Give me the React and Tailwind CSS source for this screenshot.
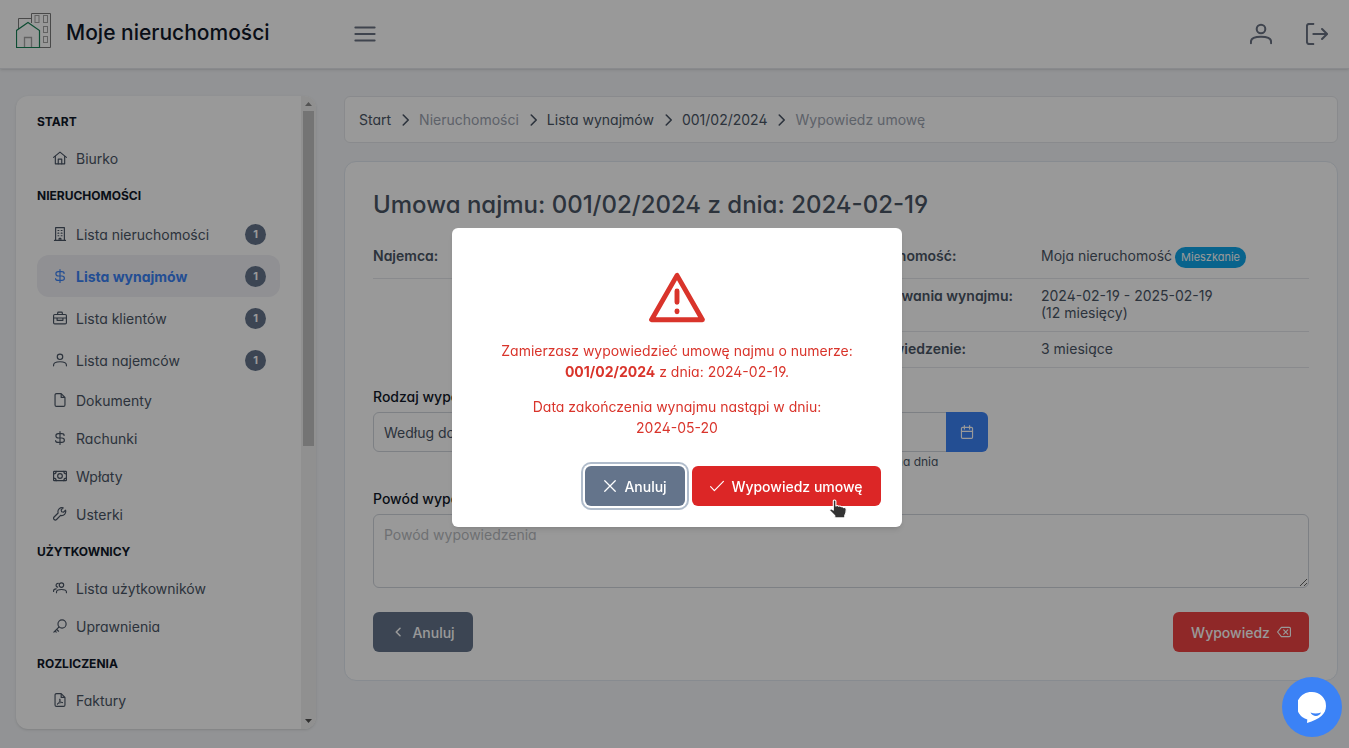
import React from "react";

function Icon({ size = "size-[14px]", sw = 2, className = "", children }) {
  return (
    <svg
      viewBox="0 0 24 24"
      fill="none"
      stroke="currentColor"
      strokeWidth={sw}
      strokeLinecap="round"
      strokeLinejoin="round"
      aria-hidden="true"
      className={`${size} shrink-0 ${className}`}
    >
      {children}
    </svg>
  );
}

const glyphs = {
  home: (
    <>
      <path d="M1 11 12 2l11 9" />
      <path d="M4 9v13h16V9" />
      <path d="M9 22v-8h6v8" />
    </>
  ),
  building: (
    <>
      <path d="M4.500 23V1h15v22M2.500 23h19" />
      <path d="M8.500 6h1.500M14 6h1.500M8.500 10.500h1.500M14 10.500h1.500M8.500 15h1.500M14 15h1.500M10.500 23v-3.500h3V23" />
    </>
  ),
  dollar: (
    <path d="M12 1v22M19 7.500C19 5.500 17.500 4.500 15 4.500H9C6.500 4.500 5 6 5 8.200S6.500 12 9 12h6c2.500 0 4.500 1.500 4.500 3.800s-2 3.700-4.500 3.700H9c-2.500 0-4.500-1-4.500-3" />
  ),
  briefcase: (
    <>
      <rect x="1" y="6" width="22" height="16" rx="2" />
      <path d="M8 6V3.500A1.500 1.500 0 0 1 9.500 2h5A1.500 1.500 0 0 1 16 3.500V6M1 12h22M7 12v4h10v-4" />
    </>
  ),
  user: (
    <>
      <circle cx="12" cy="6.500" r="4.700" />
      <path d="M1 22v-1.500c0-3.500 4-5.500 11-5.500s11 2 11 5.500V22" />
    </>
  ),
  file: (
    <path d="M14 1H6a2.500 2.500 0 0 0-2.500 2.500v17A2.500 2.500 0 0 0 6 23h12a2.500 2.500 0 0 0 2.500-2.500V7.500L14 1v6.500h6.500" />
  ),
  money: (
    <>
      <rect x="1" y="4" width="22" height="16" rx="1" />
      <circle cx="12" cy="12" r="4" />
      <path d="M1 8.500C4 8.500 5.500 7 5.500 4M23 8.500c-3 0-4.500-1.500-4.500-4.500M1 15.500c3 0 4.500 1.500 4.500 4.500M23 15.500c-3 0-4.500 1.500-4.500 4.500" />
    </>
  ),
  wrench: (
    <path d="M21.500 5.500 18 9l-3.200-.8L14 5l3.500-3.500a7 7 0 0 0-8.700 8.800L1.900 17.200a3 3 0 0 0 0 4.200 3 3 0 0 0 4.200 0l6.900-7a7 7 0 0 0 8.500-8.900z" />
  ),
  users: (
    <>
      <circle cx="14.500" cy="7" r="3.800" />
      <path d="M6 20v-1.500c0-2.500 3.500-4 8.500-4s8.500 1.500 8.500 4V20" />
      <path d="M9 4.200a3 3 0 1 0-1 6.300M1 18v-1.300c0-1.800 1.600-3 4.500-3.200" />
    </>
  ),
  key: (
    <>
      <circle cx="15.500" cy="8.500" r="7" />
      <path d="M10.500 13.500 1.500 22.500M6.500 18l3 3M3.500 20.500l2 2" />
    </>
  ),
  pdf: (
    <>
      <path d="M14 1H6a2.500 2.500 0 0 0-2.500 2.500v17A2.500 2.500 0 0 0 6 23h12a2.500 2.500 0 0 0 2.500-2.500V7.500L14 1v6.500h6.500" />
      <path d="M7.500 19c3-1.500 4.500-5 4.200-9 0 4 2 6.500 5.300 6.500-3.500-.5-7 .5-9.500 2.500z" strokeWidth="1.500" />
    </>
  ),
};

const menu = [
  { title: "Start", items: [{ icon: "home", label: "Biurko" }] },
  {
    title: "Nieruchomości",
    items: [
      { icon: "building", label: "Lista nieruchomości", badge: 1 },
      { icon: "dollar", label: "Lista wynajmów", badge: 1, active: true },
      { icon: "briefcase", label: "Lista klientów", badge: 1 },
      { icon: "user", label: "Lista najemców", badge: 1 },
      { icon: "file", label: "Dokumenty" },
      { icon: "dollar", label: "Rachunki" },
      { icon: "money", label: "Wpłaty" },
      { icon: "wrench", label: "Usterki" },
    ],
  },
  {
    title: "Użytkownicy",
    items: [
      { icon: "users", label: "Lista użytkowników" },
      { icon: "key", label: "Uprawnienia" },
    ],
  },
  { title: "Rozliczenia", items: [{ icon: "pdf", label: "Faktury" }] },
];

function Logo() {
  return (
    <svg viewBox="0 0 36 36" fill="none" className="size-9" aria-hidden="true">
      <g stroke="#7a7a7a" strokeWidth="1">
        <path d="M2.500 16V5.500h13M15.500 10V.500h19v34h-11" />
      </g>
      <g stroke="#a3a3a3" strokeWidth="1">
        <rect x="19" y="2.500" width="4" height="7" />
        <rect x="27.500" y="2.500" width="4" height="7" />
        <rect x="27.500" y="13.500" width="4" height="6" />
        <rect x="27.500" y="23.500" width="4" height="6" />
        <path d="M8.500 34v-9.500h7V34" strokeWidth="1.300" />
      </g>
      <path d="M.500 34.500v-17L12 9.500l11.500 8v17z" stroke="#178055" strokeWidth="1.200" />
    </svg>
  );
}

function Header() {
  return (
    <header className="flex h-[69px] shrink-0 items-center border-b border-gray-200 bg-white pl-4 pr-[21px] text-gray-500 shadow-sm">
      <a href="#start" className="flex w-[338px] items-center gap-[14px] pb-0.5 text-[21px] font-medium text-gray-900">
        <span className="-mt-1">
          <Logo />
        </span>
        Moje nieruchomości
      </a>
      <button type="button" aria-label="Menu">
        <Icon size="size-[22px]" sw={2.200}>
          <path d="M1.500 5h21M1.500 12h21M1.500 19h21" />
        </Icon>
      </button>
      <div className="ml-auto flex items-center gap-[34px]">
        <button type="button" aria-label="Profil">
          <Icon size="size-[22px]" sw={2.200}>
            {glyphs.user}
          </Icon>
        </button>
        <button type="button" aria-label="Wyloguj">
          <Icon size="size-[22px]" sw={2.200}>
            <path d="M8 1H3.500A2.500 2.500 0 0 0 1 3.500v17A2.500 2.500 0 0 0 3.500 23H8M8 12h15M17.500 6.500 23 12l-5.500 5.500" />
          </Icon>
        </button>
      </div>
    </header>
  );
}

function Sidebar() {
  return (
    <aside className="flex w-[300px] shrink-0 overflow-hidden rounded-xl bg-white shadow">
      <nav className="min-w-0 flex-1 overflow-hidden px-[21px] pt-[7px]">
        {menu.map((group) => (
          <section key={group.title}>
            <h2 className="flex h-9 items-center pt-0.5 text-[12px] font-bold uppercase text-gray-900">{group.title}</h2>
            <ul>
              {group.items.map((item) => (
                <li key={item.label}>
                  <a
                    href="#menu"
                    className={`flex items-center gap-[9px] rounded-xl pl-4 pr-[14px] ${item.badge ? "h-[42px]" : "h-[38px]"} ${
                      item.active ? "bg-[#f0f0f5] font-bold text-[#3b82f6]" : ""
                    }`}
                  >
                    <Icon>{glyphs[item.icon]}</Icon>
                    <span className="flex-1">{item.label}</span>
                    {item.badge && (
                      <span className="flex size-[21px] items-center justify-center rounded-full bg-[#64748b] text-[11px] font-bold text-white">
                        {item.badge}
                      </span>
                    )}
                  </a>
                </li>
              ))}
            </ul>
          </section>
        ))}
      </nav>
      <div className="flex w-[15px] flex-col items-center bg-[#f1f1f1]" aria-hidden="true">
        <svg viewBox="0 0 15 15" className="size-[15px]">
          <path d="M4 10h7L7.500 6z" fill="#8b8b8b" />
        </svg>
        <div className="w-[11px] basis-[335px] bg-[#c1c1c1]" />
        <div className="flex-1" />
        <svg viewBox="0 0 15 15" className="size-[15px]">
          <path d="M4 5h7L7.500 9z" fill="#505050" />
        </svg>
      </div>
    </aside>
  );
}

function Breadcrumb() {
  const parts = [
    { label: "Start" },
    { label: "Nieruchomości", muted: true },
    { label: "Lista wynajmów" },
    { label: "001/02/2024" },
    { label: "Wypowiedz umowę", muted: true },
  ];
  return (
    <nav aria-label="Ścieżka" className="flex h-[47px] items-center rounded-md border border-gray-200 bg-white px-[14px]">
      <ol className="flex items-center gap-[7px]">
        {parts.map((part, i) => (
          <li key={part.label} className="flex items-center gap-[7px]">
            {i > 0 && (
              <Icon sw={2.800}>
                <path d="M9 3.500 17.500 12 9 20.500" />
              </Icon>
            )}
            {part.muted ? (
              <span className="text-[#9ca3af]">{part.label}</span>
            ) : (
              <a href="#sciezka">{part.label}</a>
            )}
          </li>
        ))}
      </ol>
    </nav>
  );
}

const cell = "border-b border-gray-200 pt-2 pb-[10px] text-left align-top";

function DetailsTable({ rows }) {
  return (
    <table className="w-full self-start border-collapse leading-[17px]">
      <tbody>
        {rows.map(([label, value]) => (
          <tr key={label}>
            <th scope="row" className={`${cell} w-[188px] font-semibold`}>
              {label}
            </th>
            <td className={cell}>{value}</td>
          </tr>
        ))}
      </tbody>
    </table>
  );
}

const fieldBox = "rounded-md border border-gray-300 bg-white px-[10px] text-gray-600 placeholder:text-[#b8bbc0]";
const buttonBase = "flex h-10 items-center justify-center rounded-md text-white font-medium";

function ContractCard() {
  return (
    <section className="rounded-xl border border-slate-200 bg-white p-7">
      <h1 className="mb-[19px] text-[24px] leading-[30px] font-medium">Umowa najmu: 001/02/2024 z dnia: 2024-02-19</h1>
      <div className="grid grid-cols-2">
        <DetailsTable
          rows={[["Najemca:", <span className="block h-[21px]">Jan</span>]]}
        />
        <div className="pl-3">
          <DetailsTable
            rows={[
              [
                "Nieruchomość:",
                <span className="flex h-[21px] gap-[3px]">
                  Moja nieruchomość
                  <span className="flex h-[21px] items-center rounded-full bg-[#0ea5e9] px-[6px] text-[11px] text-white">
                    Mieszkanie
                  </span>
                </span>,
              ],
              [
                "Czas trwania wynajmu:",
                <>
                  2024-02-19 - 2025-02-19
                  <br />
                  (12 miesięcy)
                </>,
              ],
              ["Wypowiedzenie:", "3 miesiące"],
            ]}
          />
        </div>
      </div>
      <form className="mt-5">
        <div className="grid grid-cols-3 gap-7">
          <div className="flex flex-col">
            <label htmlFor="rodzaj" className="mb-[7px] leading-[17px] font-medium text-gray-900">
              Rodzaj wypowiedzenia
            </label>
            <select id="rodzaj" className={`h-10 w-full appearance-none ${fieldBox}`}>
              <option>Według dowolnej daty</option>
            </select>
          </div>
          <div className="flex flex-col">
            <label htmlFor="data" className="mb-[7px] leading-[17px] font-medium text-gray-900">
              Data
            </label>
            <div className="flex">
              <input
                id="data"
                type="text"
                defaultValue="2024-05-20"
                className={`h-10 min-w-0 flex-1 rounded-r-none border-r-0 ${fieldBox}`}
              />
              <button
                type="button"
                aria-label="Kalendarz"
                className="flex h-10 w-[42px] items-center justify-center rounded-r-md bg-[#3b82f6] text-white"
              >
                <Icon>
                  <rect x="2.500" y="4" width="19" height="19" rx="2" />
                  <path d="M2.500 11h19M7.500 1v6M16.500 1v6" />
                </Icon>
              </button>
            </div>
            <small className="mt-[3px] text-[12px] leading-[14px]">Umowa najmu będzie wypowiedziana dnia</small>
          </div>
        </div>
        <label htmlFor="powod" className="mt-[21px] mb-[7px] block leading-[17px] font-medium text-gray-900">
          Powód wypowiedzenia
        </label>
        <textarea
          id="powod"
          placeholder="Powód wypowiedzenia"
          className={`block h-[74px] w-full resize py-[10px] leading-5 ${fieldBox}`}
        />
        <div className="mt-6 flex justify-between">
          <button type="button" className={`${buttonBase} w-[100px] gap-[7px] bg-[#64748b]`}>
            <Icon sw={2.600}>
              <path d="M15.500 5.500 9 12l6.500 6.500" />
            </Icon>
            Anuluj
          </button>
          <button type="button" className={`${buttonBase} w-[136px] gap-[7px] bg-[#ef4444]`}>
            Wypowiedz
            <Icon>
              <path d="M7.500 4H21a2 2 0 0 1 2 2v12a2 2 0 0 1-2 2H7.500L1 12zM11.500 8.500l7 7M18.500 8.500l-7 7" />
            </Icon>
          </button>
        </div>
      </form>
    </section>
  );
}

function Pointer() {
  return (
    <svg viewBox="0 0 18 20" className="absolute right-[34px] top-[33px] h-5 w-[18px]" aria-hidden="true">
      <path
        d="M4.300 2.200c0-1.700 2.600-1.700 2.600 0V7c.9-.6 2.200-.4 2.800.3.800-.4 2.100-.2 2.600.5.900-.3 2 0 2.300.8 1.500-.3 2.600.4 2.600 1.800 0 2.600-.2 4-1.400 5.800v2.700H5.800v-2.200L1 11.800c-.7-1.200.6-2.400 1.700-1.700l1.600 1z"
        fill="#333"
        stroke="#fff"
        strokeWidth="1.100"
        strokeLinejoin="round"
      />
    </svg>
  );
}

function ConfirmDialog() {
  return (
    <div className="fixed inset-0 flex items-center justify-center bg-black/40 pt-[7px] pl-[5px]">
      <div
        role="alertdialog"
        aria-modal="true"
        aria-labelledby="confirm-text"
        className="w-[450px] rounded-md bg-white px-[21px] pt-[42px] pb-[21px] shadow-md"
      >
        <div id="confirm-text" className="flex flex-col items-center text-center leading-[21px] text-[#d9342b]">
          <Icon size="size-14" sw={2.100} className="mb-[14px]">
            <path d="M12 2.300 1.100 21.300h21.800z" />
            <path d="M12 9v4.800M12 17.500v.4" />
          </Icon>
          <p className="mb-[14px]">
            Zamierzasz wypowiedzieć umowę najmu o numerze:
            <br />
            <b>001/02/2024</b> z dnia: 2024-02-19.
          </p>
          <p>
            Data zakończenia wynajmu nastąpi w dniu:
            <br />
            2024-05-20
          </p>
        </div>
        <div className="mt-7 flex justify-end gap-[7px]">
          <button type="button" className={`${buttonBase} w-[100px] gap-[7px] bg-[#64748b] ring-2 ring-[#b0bccb] ring-offset-2`}>
            <Icon sw={2.200}>
              <path d="M3 3l18 18M21 3 3 21" />
            </Icon>
            Anuluj
          </button>
          <button type="button" className={`${buttonBase} relative w-[189px] gap-[7px] bg-[#dc2626]`}>
            <Icon>
              <path d="M1 13l6.500 7L23 4" />
            </Icon>
            Wypowiedz umowę
            <Pointer />
          </button>
        </div>
      </div>
    </div>
  );
}

export default function App() {
  return (
    <div className="flex h-screen flex-col bg-[#f3f5f8] font-['Inter',sans-serif] text-[14px] text-gray-600 [font-feature-settings:'cv02','cv03','cv04','cv11']">
      <Header />
      <div className="flex min-h-0 flex-1 gap-7 pt-[27px] pr-[11px] pb-[19px] pl-4">
        <Sidebar />
        <main className="flex min-w-0 flex-1 flex-col gap-[18px]">
          <Breadcrumb />
          <ContractCard />
        </main>
      </div>
      <ConfirmDialog />
      <button
        type="button"
        aria-label="Czat"
        className="fixed right-[7px] bottom-[11px] flex size-[60px] items-center justify-center rounded-full bg-[#3b82f6]"
      >
        <svg viewBox="0 0 28 31" className="h-[31px] w-7" aria-hidden="true">
          <path d="M14 0a14 14 0 0 1 14 14c0 8-6 13-19 17l.300-3.500A14 14 0 0 1 14 0z" fill="#fff" />
          <path d="M12.500 20.500c3 1.300 7 1.300 10.500 0-1.500 4.500-8.500 4.500-10.500 0z" fill="#3b82f6" />
        </svg>
      </button>
    </div>
  );
}
